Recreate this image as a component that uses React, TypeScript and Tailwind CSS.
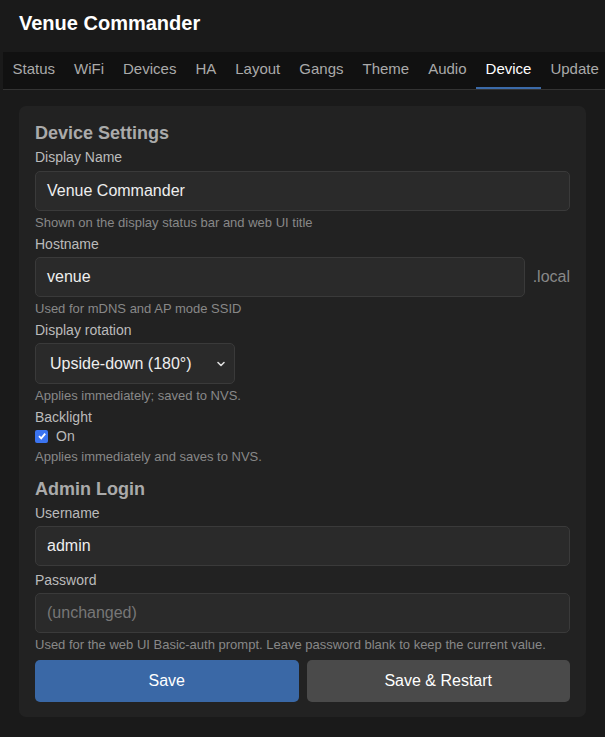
import React from "react";

const tabs = ["Status","WiFi","Devices","HA","Layout","Gangs","Theme","Audio","Device","Update"];

function Input({ value, placeholder }: { value?: string; placeholder?: string }) {
  return (
    <div className={"h-[40px] w-full rounded-[5px] border border-[#3a3a3a] bg-[#2a2a2a] px-[11px] flex items-center text-[16px] " + (value ? "text-[#eee]" : "text-[#777]")}>
      {value ?? placeholder}
    </div>
  );
}

export default function App() {
  return (
    <div className="min-h-[737px] bg-[#1a1a1a] text-[#ddd] overflow-hidden" style={{ fontFamily: "'Liberation Sans', Arial, sans-serif" }}>
      <div className="h-[52px] pl-[19px] pt-[11px] text-[20px] leading-[24px] font-bold text-white">Venue Commander</div>
      <div className="ml-[3px] h-[38px] bg-[#111] border-b border-[#333] flex items-stretch text-[15px]">
        {tabs.map(t => (
          <div key={t} className={"px-[9.5px] flex items-center border-b-2 " + (t === "Device" ? "text-white border-[#3b6aa8]" : "text-[#aaa] border-transparent")}>{t}</div>
        ))}
      </div>
      <div className="mx-[19px] mt-[16px] rounded-[7px] bg-[#222] px-[16px] pt-[16px] pb-[15px] text-[14px]">
        <div className="text-[18px] font-bold text-[#aaa] leading-[22px]">Device Settings</div>
        <div className="mt-[4px] text-[#bbb] leading-[18px]">Display Name</div>
        <div className="mt-[5px]"><Input value="Venue Commander" /></div>
        <div className="mt-[3px] text-[13px] text-[#888] leading-[18px]">Shown on the display status bar and web UI title</div>
        <div className="mt-[3px] text-[#bbb] leading-[18px]">Hostname</div>
        <div className="mt-[4px] flex items-center gap-[8px] h-[40px]">
          <div className="flex-1"><Input value="venue" /></div>
          <span className="text-[16px] text-[#888]">.local</span>
        </div>
        <div className="mt-[3px] text-[13px] text-[#888] leading-[18px]">Used for mDNS and AP mode SSID</div>
        <div className="mt-[3px] text-[#bbb] leading-[18px]">Display rotation</div>
        <div className="mt-[4px] h-[41px] w-[200px] rounded-[5px] border border-[#3a3a3a] bg-[#2a2a2a] pl-[14px] pr-[8px] flex items-center justify-between text-[16px] text-[#eee]">
          <span>Upside-down (180°)</span>
          <svg width="10" height="10" viewBox="0 0 10 10"><path d="M2 3.5 L5 6.5 L8 3.5" stroke="#ddd" strokeWidth="1.6" fill="none" strokeLinecap="round" strokeLinejoin="round"/></svg>
        </div>
        <div className="mt-[3px] text-[13px] text-[#888] leading-[18px]">Applies immediately; saved to NVS.</div>
        <div className="mt-[3px] text-[#bbb] leading-[18px]">Backlight</div>
        <div className="mt-[1px] flex items-center gap-[8px] leading-[18px]">
          <span className="w-[13px] h-[13px] rounded-[2px] bg-[#3b74f0] flex items-center justify-center">
            <svg width="10" height="10" viewBox="0 0 10 10"><path d="M2 5.2 L4.2 7.4 L8.2 2.6" stroke="#fff" strokeWidth="1.8" fill="none"/></svg>
          </span>
          <span className="text-[#bbb]">On</span>
        </div>
        <div className="mt-[3px] text-[13px] text-[#888] leading-[18px]">Applies immediately and saves to NVS.</div>
        <div className="mt-[12px] text-[18px] font-bold text-[#aaa] leading-[22px]">Admin Login</div>
        <div className="mt-[4px] text-[#bbb] leading-[18px]">Username</div>
        <div className="mt-[4px]"><Input value="admin" /></div>
        <div className="mt-[5px] text-[#bbb] leading-[18px]">Password</div>
        <div className="mt-[4px]"><Input placeholder="(unchanged)" /></div>
        <div className="mt-[3px] text-[13px] text-[#888] leading-[18px] whitespace-nowrap">Used for the web UI Basic-auth prompt. Leave password blank to keep the current value.</div>
        <div className="mt-[6px] grid grid-cols-2 gap-[8px]">
          <div className="h-[42px] rounded-[5px] bg-[#3a68a6] flex items-center justify-center text-[16px] text-white">Save</div>
          <div className="h-[42px] rounded-[5px] bg-[#4a4a4a] flex items-center justify-center text-[16px] text-white">Save &amp; Restart</div>
        </div>
      </div>
    </div>
  );
}
